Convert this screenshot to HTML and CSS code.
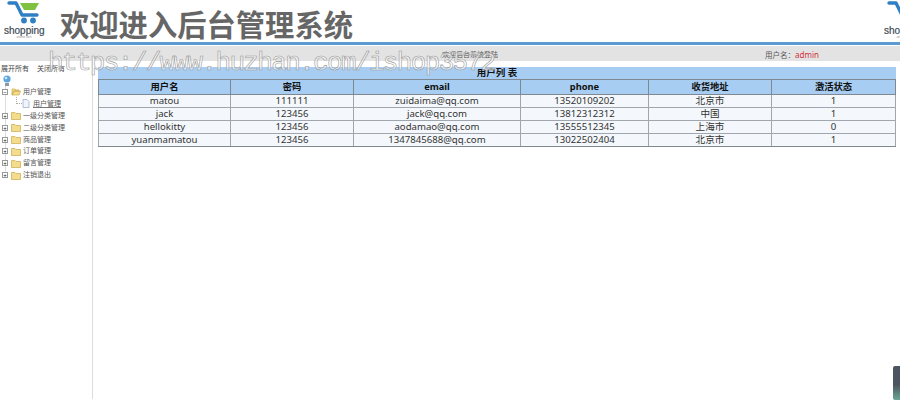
FILE: index.html
```html
<!DOCTYPE html>
<html lang="zh-CN">
<head>
    <meta charset="UTF-8">
    <title>后台管理系统</title>
    <link rel="stylesheet" href="styles.css">
</head>
<body>
    <div class="header">
        <div class="logo">
            <svg width="40" height="25" viewBox="0 0 40 25">
                <path d="M5 3H12L18 15H33" fill="none" stroke="#2f7fc4" stroke-width="3.4" stroke-linecap="round" stroke-linejoin="round"/>
                <path d="M16 3H35L31 10H20Z" fill="#7fc241"/>
                <circle cx="20" cy="20.5" r="2.9" fill="#2f7fc4"/>
                <circle cx="29" cy="20.5" r="2.9" fill="#2f7fc4"/>
            </svg>
            <div class="logo-name">shopping</div>
            <div class="logo-sub">online cart</div>
        </div>
        <h1>欢迎进入后台管理系统</h1>
        <div class="logo logo-right">
            <svg width="40" height="25" viewBox="0 0 40 25">
                <path d="M5 3H12L18 15H33" fill="none" stroke="#2f7fc4" stroke-width="3.4" stroke-linecap="round" stroke-linejoin="round"/>
                <path d="M16 3H35L31 10H20Z" fill="#7fc241"/>
                <circle cx="20" cy="20.5" r="2.9" fill="#2f7fc4"/>
                <circle cx="29" cy="20.5" r="2.9" fill="#2f7fc4"/>
            </svg>
            <div class="logo-name">shopping</div>
            <div class="logo-sub">online cart</div>
        </div>
    </div>

    <div class="topbar">
        <span class="welcome">欢迎后台系统登陆</span>
        <span class="user">用户名：<em>admin</em></span>
    </div>

    <div class="main">
        <div class="side">
            <div class="side-links"><span>展开所有</span><span>关闭所有</span></div>
            <div class="tree-root">
                <svg width="10" height="12" viewBox="0 0 10 12">
                    <circle cx="5" cy="4" r="3.6" fill="#5fa5dc"/>
                    <circle cx="4" cy="3" r="1.3" fill="#cfe6f7"/>
                    <rect x="3" y="8" width="4" height="3" fill="#8c9aa8"/>
                </svg>
            </div>
            <ul class="tree">
                <li>
                    <i class="box">−</i>
                    <svg class="folder" width="10" height="9" viewBox="0 0 10 9">
                        <path d="M1 8V2H4L5 3H8V4H3L1 8ZM1 8H8L9.5 4H3Z" fill="#f3dc8c" stroke="#c9a94a" stroke-width=".7"/>
                    </svg>
                    用户管理
                </li>
                <li class="leaf">
                    <i class="elbow"></i>
                    <svg class="page" width="8" height="9" viewBox="0 0 8 9">
                        <path d="M1 .5H5L7 2.5V8.5H1Z" fill="#f1f4fb" stroke="#9fb0d0" stroke-width=".8"/>
                    </svg>
                    <u>用户管理</u>
                </li>
                <li><i class="box">+</i><svg class="folder" width="10" height="9" viewBox="0 0 10 9"><path d="M.5 8.5V1.5H4L5 2.5H9.5V8.5Z" fill="#f3dc8c" stroke="#c9a94a" stroke-width=".7"/></svg>一级分类管理</li>
                <li><i class="box">+</i><svg class="folder" width="10" height="9" viewBox="0 0 10 9"><path d="M.5 8.5V1.5H4L5 2.5H9.5V8.5Z" fill="#f3dc8c" stroke="#c9a94a" stroke-width=".7"/></svg>二级分类管理</li>
                <li><i class="box">+</i><svg class="folder" width="10" height="9" viewBox="0 0 10 9"><path d="M.5 8.5V1.5H4L5 2.5H9.5V8.5Z" fill="#f3dc8c" stroke="#c9a94a" stroke-width=".7"/></svg>商品管理</li>
                <li><i class="box">+</i><svg class="folder" width="10" height="9" viewBox="0 0 10 9"><path d="M.5 8.5V1.5H4L5 2.5H9.5V8.5Z" fill="#f3dc8c" stroke="#c9a94a" stroke-width=".7"/></svg>订单管理</li>
                <li><i class="box">+</i><svg class="folder" width="10" height="9" viewBox="0 0 10 9"><path d="M.5 8.5V1.5H4L5 2.5H9.5V8.5Z" fill="#f3dc8c" stroke="#c9a94a" stroke-width=".7"/></svg>留言管理</li>
                <li><i class="box">+</i><svg class="folder" width="10" height="9" viewBox="0 0 10 9"><path d="M.5 8.5V1.5H4L5 2.5H9.5V8.5Z" fill="#f3dc8c" stroke="#c9a94a" stroke-width=".7"/></svg>注销退出</li>
            </ul>
        </div>
        <div class="content">
            <table class="list">
                <caption>用户列 表</caption>
                <colgroup>
                    <col class="col-name">
                    <col class="col-pass">
                    <col class="col-email">
                    <col class="col-phone">
                    <col class="col-addr">
                    <col class="col-state">
                </colgroup>
                <thead>
                    <tr>
                        <th>用户名</th>
                        <th>密码</th>
                        <th>email</th>
                        <th>phone</th>
                        <th>收货地址</th>
                        <th>激活状态</th>
                    </tr>
                </thead>
                <tbody>
                    <tr><td>matou</td><td>111111</td><td>zuidaima@qq.com</td><td>13520109202</td><td>北京市</td><td>1</td></tr>
                    <tr><td>jack</td><td>123456</td><td>jack@qq.com</td><td>13812312312</td><td>中国</td><td>1</td></tr>
                    <tr><td>hellokitty</td><td>123456</td><td>aodamao@qq.com</td><td>13555512345</td><td>上海市</td><td>0</td></tr>
                    <tr><td>yuanmamatou</td><td>123456</td><td>1347845688@qq.com</td><td>13022502404</td><td>北京市</td><td>1</td></tr>
                </tbody>
            </table>
        </div>
    </div>

    <div class="watermark">https://www.huzhan.com/ishop3572</div>
    <div class="corner"></div>
</body>
</html>
```

FILE: styles.css
```css
html, body {
    margin: 0;
    padding: 0;
}
body {
    width: 900px;
    height: 420px;
    overflow: hidden;
    position: relative;
    background: #fff;
    color: #222;
    font-family: "Noto Sans", "Noto Sans CJK SC", sans-serif;
    font-size: 7px;
}
.header {
    display: flex;
    height: 42px;
    padding-left: 4px;
    border-bottom: 3px solid #5b9bd1;
    box-sizing: content-box;
}
.logo {
    width: 40px;
    flex: none;
    text-align: center;
}
.logo svg {
    display: block;
}
.logo-name {
    font-family: "Liberation Sans", sans-serif;
    font-size: 10px;
    line-height: 9px;
    margin-top: 1px;
    color: #3c4a55;
    -webkit-text-stroke: 0.2px #3c4a55;
}
.logo-sub {
    font-size: 3px;
    line-height: 4px;
    color: #888;
}
.logo-right {
    margin-left: 531px;
}
h1 {
    margin: 5px 0 0 16px;
    width: 293px;
    flex: none;
    font-family: "Noto Sans CJK SC", sans-serif;
    font-size: 29.3px;
    line-height: 36px;
    font-weight: 700;
    color: #666;
    white-space: nowrap;
}
.topbar {
    height: 15px;
    margin-top: 1px;
    background: #e3e3e3;
    line-height: 18px;
    color: #555;
    display: flex;
}
.welcome {
    margin-left: 442px;
    width: 323px;
}
.user {
    font-size: 7.5px;
}
.user em {
    font-size: 8px;
    font-style: normal;
    color: #d0303a;
}
.main {
    display: flex;
    height: 338px;
}
.side {
    width: 92px;
    border-right: 1px solid #dcdcdc;
    flex: none;
}
.side-links {
    display: flex;
    gap: 8px;
    padding: 3px 0 0 1px;
    line-height: 10px;
    color: #444;
}
.tree-root {
    height: 12px;
    padding: 1px 0 0 2px;
}
.tree-root svg {
    display: block;
}
.tree {
    list-style: none;
    margin: -1px 0 0;
    padding: 0 0 0 2px;
    color: #555;
    background: linear-gradient(#ddd, #ddd) 5px 0 / 1px 90% no-repeat;
}
.tree li {
    height: 11.9px;
    line-height: 12px;
    display: flex;
    align-items: center;
}
.box {
    width: 4px;
    height: 4px;
    border: 1px solid #999;
    font: normal 6px/4px "Liberation Sans", sans-serif;
    text-align: center;
    margin-right: 3px;
    background: #fff;
    color: #222;
}
.folder {
    margin-right: 2px;
    flex: none;
}
.leaf {
    padding-left: 14px;
}
.leaf u {
    text-decoration-color: #777;
}
.elbow {
    width: 5px;
    height: 6px;
    margin-top: -6px;
    border-left: 1px dotted #aaa;
    border-bottom: 1px dotted #aaa;
}
.page {
    margin-right: 3px;
    flex: none;
}
.content {
    flex: 1;
    padding: 6px 5px 0 5px;
}
.list {
    width: 797px;
    border-collapse: collapse;
    table-layout: fixed;
    font-size: 9.6px;
    color: #333;
}
.col-name { width: 132px; }
.col-pass { width: 123px; }
.col-email { width: 167px; }
.col-phone { width: 128px; }
.col-addr { width: 123px; }
.col-state { width: 124px; }
.list caption {
    height: 12px;
    background: #a8cdf2;
    font-size: 9.5px;
    font-weight: 700;
    line-height: 12px;
    color: #111;
    text-align: center;
}
.list th,
.list td {
    border: 1px solid #7f8791;
    padding: 0;
    text-align: center;
}
.list th {
    height: 14px;
    line-height: 14px;
    font-size: 9.3px;
    background: #a8cdf2;
    color: #111;
}
.list td {
    height: 12px;
    line-height: 12px;
    background: #f4f8fc;
    border-color: #a0a6ae;
}
.list tbody tr:last-child td {
    border-bottom-color: #7f8791;
}
.watermark {
    position: absolute;
    left: 48px;
    top: 50px;
    font-family: "Liberation Mono", monospace;
    font-size: 26px;
    letter-spacing: -1.65px;
    line-height: 26px;
    color: rgba(255, 255, 255, 0.6);
    -webkit-text-stroke: 0.6px #9a9a9a;
    white-space: nowrap;
}
.corner {
    position: absolute;
    right: 0;
    top: 366px;
    width: 7px;
    height: 34px;
    background: linear-gradient(#4d5560 55%, #6aa893);
    border-radius: 2px 0 0 2px;
}
```
